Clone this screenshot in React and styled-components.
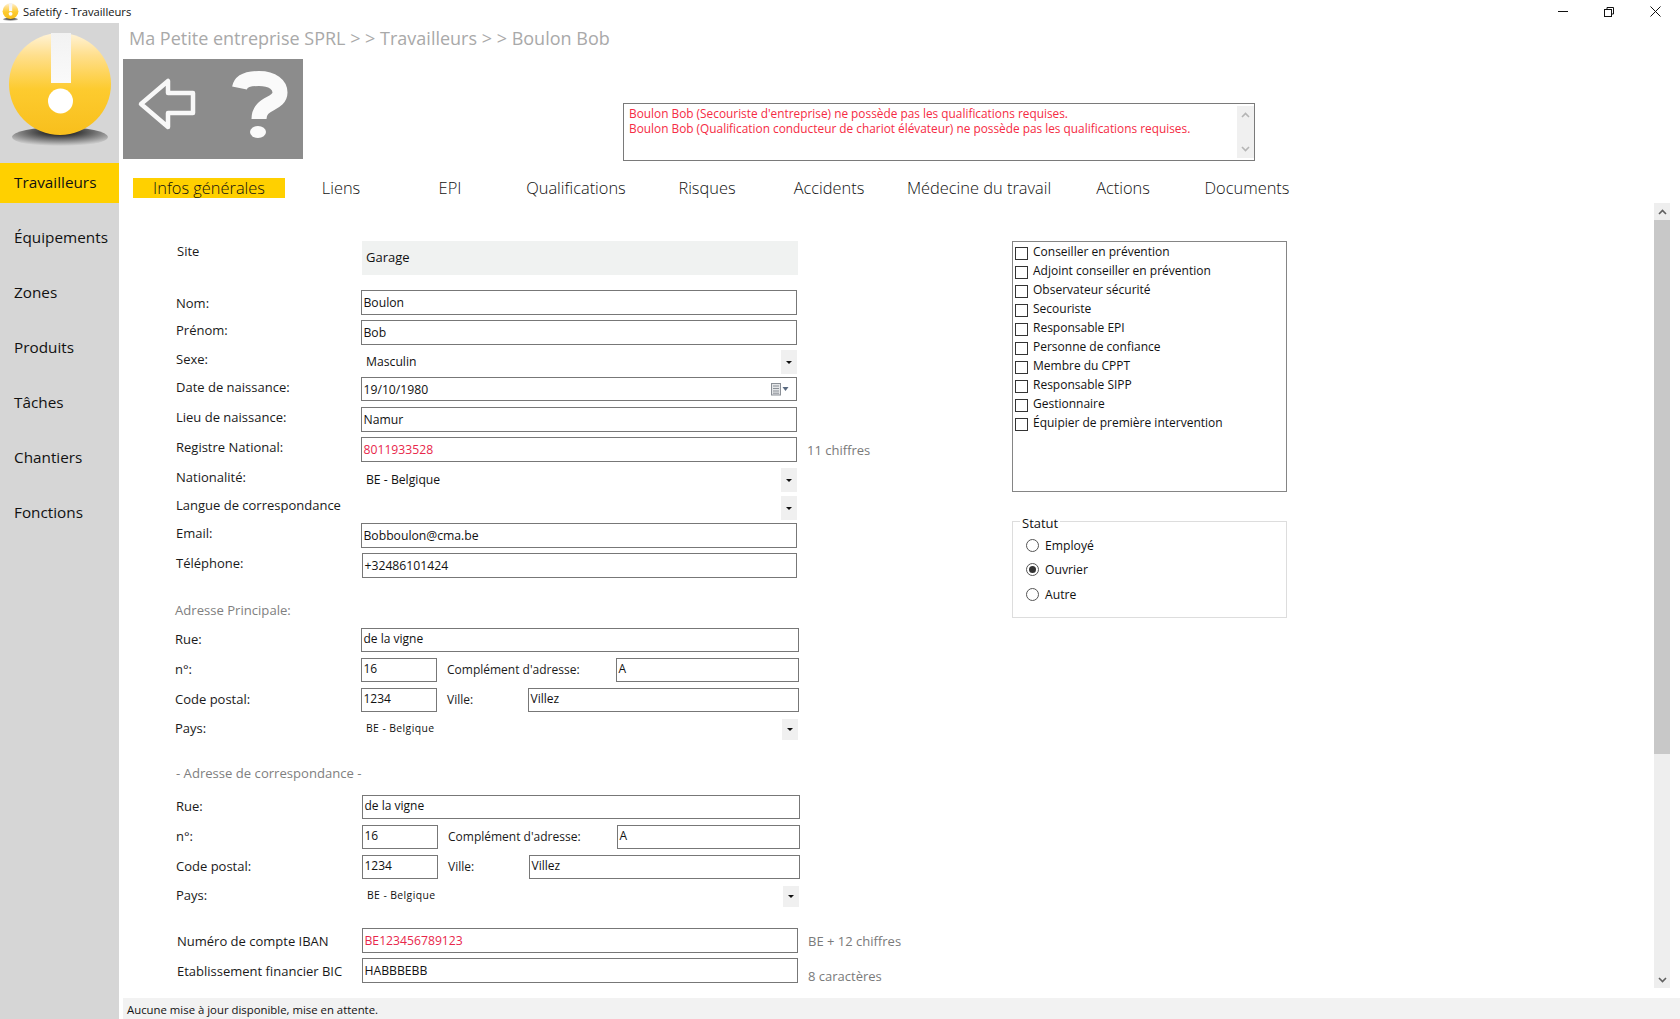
import React from 'react';
import styled, { createGlobalStyle } from 'styled-components';

const Global = createGlobalStyle`
  html, body { margin: 0; padding: 0; background: #fff; }
  body { font-family: "Open Sans", "Noto Sans", sans-serif; color: #111; }
  * { box-sizing: border-box; }
`;

const Window = styled.div`
  width: 1680px; height: 1019px; display: flex; flex-direction: column; overflow: hidden; background: #fff;
`;
const TitleBar = styled.div`
  height: 23px; display: flex; align-items: center; padding: 0 2px; font-size: 11.2px; color: #111;
`;
const TitleText = styled.span` margin-left: 4px; flex: 1; `;
const WinButton = styled.div`
  width: 46px; height: 23px; display: flex; align-items: center; justify-content: center;
`;
const Body = styled.div` display: flex; flex: 1; min-height: 0; `;
const Sidebar = styled.nav` width: 119px; background: #d6d6d6; display: flex; flex-direction: column; `;
const LogoWrap = styled.div` height: 140px; `;
const NavItem = styled.div`
  height: 40px; margin-bottom: 15px; padding: 0 0 2px 14px; display: flex; align-items: center;
  font-size: 15.3px; color: #111; background: ${p => (p.$active ? '#ffd000' : 'transparent')};
`;
const Main = styled.main` flex: 1; min-width: 0; display: flex; flex-direction: column; `;
const Breadcrumb = styled.div`
  height: 36px; padding: 2px 0 0 10px; font-size: 18px; line-height: 26px; color: #a9a9a9; white-space: pre;
`;
const Toolbar = styled.div` height: 100px; padding-left: 4px; display: flex; `;
const ActionButton = styled.div` width: 180px; height: 100px; background: #8c8c8c; `;
const ErrorBox = styled.div`
  width: 632px; height: 58px; margin: 44px 0 0 320px; border: 1px solid #7a7a7a; display: flex;
  padding: 2px 0 2px 5px; justify-content: space-between;
`;
const ErrorText = styled.div`
  color: #f52c44; font-size: 11.85px; line-height: 15px;
`;
const MiniBar = styled.div`
  width: 17px; background: #f0f0f0; display: flex; flex-direction: column; align-items: center; justify-content: space-between; padding: 6px 0;
`;
const Tabs = styled.div` margin-top: 19px; height: 20px; padding-left: 14px; display: flex; `;
const Tab = styled.div`
  width: ${p => p.$w}px; height: 20px; padding-bottom: 2px; display: flex; align-items: center; justify-content: center;
  font-size: 16.4px; font-weight: 300; color: #111; white-space: nowrap;
  background: ${p => (p.$active ? '#ffd000' : 'transparent')};
`;
const Content = styled.div` margin-top: 5px; flex: 1; min-height: 0; display: flex; `;
const FormArea = styled.div` flex: 1; min-width: 0; display: flex; padding: 38px 0 0 56px; `;
const LeftCol = styled.div` width: 760px; display: flex; flex-direction: column; `;
const RightCol = styled.div` margin-left: 77px; width: 275px; display: flex; flex-direction: column; `;
const Scrollbar = styled.div`
  width: 16px; margin-right: 10px; margin-bottom: 10px; background: #eee; display: flex; flex-direction: column;
`;
const ScrollEnd = styled.div` height: 17px; display: flex; align-items: center; justify-content: center; `;
const ScrollThumb = styled.div` height: 534px; background: #c8c8c8; `;
const ScrollRest = styled.div` flex: 1; `;
const StatusBar = styled.div`
  height: 21px; margin-left: 4px; padding: 2px 0 0 4px; background: #f2f2f2; display: flex; align-items: center; font-size: 11.36px; color: #111;
`;

const Row = styled.div`
  display: flex; flex: none; margin-top: ${p => p.$mt || 0}px; margin-left: ${p => p.$ml || 0}px; height: ${p => p.$h || 25}px;
`;
const Label = styled.div`
  width: 186px; flex: none; font-size: 13px; line-height: 14px; color: #1a1a1a; white-space: nowrap;
  padding-left: ${p => p.$pl ?? 1}px; padding-top: ${p => p.$pt ?? 2}px;
`;
const InlineLabel = styled.div`
  width: ${p => p.$w}px; flex: none; font-size: 12px; line-height: 16px; color: #1a1a1a; white-space: nowrap; padding: 4px 0 0 10px;
`;
const Heading = styled.div`
  margin-top: ${p => p.$mt}px; padding-left: ${p => p.$pl || 0}px; font-size: 13.1px; height: 16px; line-height: 14px; color: #808080; flex: none;
`;
const Field = styled.div`
  width: ${p => p.$w}px; height: 100%; flex: none; border: 1px solid #777; padding: ${p => (p.$small ? '0 0 3px 1.5px' : '0 0 0 1.5px')}; display: flex; align-items: center;
  justify-content: space-between; font-size: ${p => (p.$small ? '12px' : '12.2px')};
  color: ${p => (p.$error ? '#e8274b' : '#111')}; margin-left: ${p => p.$ml || 0}px;
`;
const ReadOnlyBox = styled.div`
  width: 436px; height: 100%; margin-left: 1px; background: #f0f2f1; display: flex; align-items: center; padding: 0 0 2px 4px; font-size: 13px;
`;
const Select = styled.div`
  width: ${p => p.$w || 436}px; height: 100%; display: flex; justify-content: space-between; align-items: ${p => (p.$compact ? 'flex-start' : 'center')};
  padding-left: 5px; font-size: ${p => (p.$compact ? '10.4px' : '12.2px')};
  letter-spacing: ${p => (p.$compact ? '0.4px' : '0')}; line-height: 18px;
`;
const SelectArrow = styled.div`
  width: 16px; height: 100%; background: #f0f0f0; display: flex; align-items: center; justify-content: center; flex: none;
  &::after { content: ''; border: 3px solid transparent; border-top: 3.5px solid #111; border-bottom: 0; }
`;
const Hint = styled.div`
  font-size: 13px; line-height: 18px; color: #7a7a7a; white-space: nowrap; margin-left: ${p => p.$ml || 10}px; padding-top: ${p => p.$pt || 4}px;
`;
const CalendarSlot = styled.span` margin-right: 6px; display: flex; `;
const CheckList = styled.div`
  width: 275px; height: 251px; border: 1px solid #858585; padding: 0 0 0 2px; flex: none;
`;
const CheckRow = styled.div`
  height: 19px; display: flex; align-items: center; font-size: 12px; color: #111;
`;
const CheckBox = styled.span`
  width: 13px; height: 13px; border: 1px solid #333; flex: none; margin: 3px 5px 0 0;
`;
const StatusGroup = styled.fieldset`
  width: 275px; height: 106px; margin: 20px 0 0; padding: 2px 0 0 13px; border: 1px solid #ddd; flex: none;
  display: block;
`;
const Legend = styled.legend`
  font-size: 13px; padding: 3px 2px 0; margin-left: -6px; line-height: 16px; color: #111;
`;
const RadioRow = styled.div`
  height: 24.6px; display: flex; align-items: center; font-size: 12.2px; color: #111;
`;
const RadioDot = styled.span`
  width: 13px; height: 13px; border-radius: 50%; border: 1px solid #555; margin-right: 6px; flex: none;
  display: flex; align-items: center; justify-content: center;
  &::after { content: ''; width: 7px; height: 7px; border-radius: 50%; background: ${p => (p.$on ? '#333' : 'transparent')}; }
`;

const Logo = ({ small }) => (
  <svg width={small ? 17 : 119} height={small ? 20 : 140} viewBox={small ? '5 4 110 124' : '0 0 119 140'} style={{ display: 'block' }}>
    <defs>
      <linearGradient id={small ? 'g1s' : 'g1'} x1="0" y1="0" x2="0" y2="1">
        <stop offset="0" stopColor="#fff3d8" />
        <stop offset="0.22" stopColor="#ffdf8c" />
        <stop offset="0.55" stopColor="#fdcb2f" />
        <stop offset="1" stopColor="#f8bf1c" />
      </linearGradient>
      <linearGradient id={small ? 'g2s' : 'g2'} x1="0" y1="0" x2="0" y2="1">
        <stop offset="0" stopColor="#f2f2f2" />
        <stop offset="1" stopColor="#fafafa" />
      </linearGradient>
      <radialGradient id={small ? 'g3s' : 'g3'} cx="0.5" cy="0.25" r="0.7">
        <stop offset="0.2" stopColor="#2c2c2c" />
        <stop offset="0.6" stopColor="#808080" />
        <stop offset="1" stopColor="#d6d6d6" />
      </radialGradient>
    </defs>
    <ellipse cx="60" cy="114" rx="48" ry="10" fill={`url(#${small ? 'g3s' : 'g3'})`} />
    <circle cx="60" cy="61" r="51" fill={`url(#${small ? 'g1s' : 'g1'})`} />
    <rect x="51" y="10" width="20" height="50" fill={`url(#${small ? 'g2s' : 'g2'})`} />
    <circle cx="60.5" cy="78" r="12.5" fill="#fff" />
  </svg>
);

const ChevronUp = ({ color = '#606060' }) => (
  <svg width="9" height="6" viewBox="0 0 9 6"><path d="M1 5 L4.5 1.5 L8 5" fill="none" stroke={color} strokeWidth="1.6" /></svg>
);
const ChevronDown = ({ color = '#606060' }) => (
  <svg width="9" height="6" viewBox="0 0 9 6"><path d="M1 1 L4.5 4.5 L8 1" fill="none" stroke={color} strokeWidth="1.6" /></svg>
);

const Calendar = () => (
  <svg width="20" height="14" viewBox="0 0 20 14">
    <rect x="1.5" y="1.5" width="9" height="11.5" fill="#e4e6e8" stroke="#8a8f96" />
    <path d="M3 4h6M3 6.5h6M3 9h6M3 11.2h6" stroke="#8a8f96" strokeWidth="1" />
    <path d="M12.5 5h6l-3 4z" fill="#5a6a80" />
  </svg>
);

const tabs = [
  ['Infos générales', 152], ['Liens', 112], ['EPI', 106], ['Qualifications', 146], ['Risques', 116],
  ['Accidents', 128], ['Médecine du travail', 172], ['Actions', 116], ['Documents', 132],
];
const nav = ['Travailleurs', 'Équipements', 'Zones', 'Produits', 'Tâches', 'Chantiers', 'Fonctions'];
const roles = [
  'Conseiller en prévention', 'Adjoint conseiller en prévention', 'Observateur sécurité', 'Secouriste',
  'Responsable EPI', 'Personne de confiance', 'Membre du CPPT', 'Responsable SIPP', 'Gestionnaire',
  'Équipier de première intervention',
];

const Address = ({ ml }) => (
  <>
    <Row $mt={ml ? 13 : 9} $h={24} $ml={ml}>
      <Label $pl={0} $pt={4}>Rue:</Label>
      <Field $w={438} $small>de la vigne</Field>
    </Row>
    <Row $mt={6} $h={24} $ml={ml}>
      <Label $pl={0} $pt={4}>n°:</Label>
      <Field $w={76} $small>16</Field>
      <InlineLabel $w={179}>Complément d'adresse:</InlineLabel>
      <Field $w={183} $small>A</Field>
    </Row>
    <Row $mt={6} $h={24} $ml={ml}>
      <Label $pl={0} $pt={4}>Code postal:</Label>
      <Field $w={76} $small>1234</Field>
      <InlineLabel $w={91}>Ville:</InlineLabel>
      <Field $w={271} $small>Villez</Field>
    </Row>
    <Row $mt={7} $h={21} $ml={ml}>
      <Label $pl={0} $pt={2}>Pays:</Label>
      <Select $w={437} $compact>BE - Belgique<SelectArrow /></Select>
    </Row>
  </>
);

export default function App() {
  return (
    <Window>
      <Global />
      <TitleBar>
        <Logo small />
        <TitleText>Safetify - Travailleurs</TitleText>
        <WinButton><svg width="10" height="2"><rect width="10" height="1" fill="#111" /></svg></WinButton>
        <WinButton>
          <svg width="10" height="10" viewBox="0 0 10 10" fill="#fff" stroke="#111">
            <path d="M3 2.5V0.5H9.5V7H7.5" fill="none" />
            <rect x="0.5" y="2.5" width="7" height="7" />
          </svg>
        </WinButton>
        <WinButton>
          <svg width="11" height="11" viewBox="0 0 11 11" stroke="#111"><path d="M0.5 0.5L10.5 10.5M10.5 0.5L0.5 10.5" /></svg>
        </WinButton>
      </TitleBar>
      <Body>
        <Sidebar>
          <LogoWrap><Logo /></LogoWrap>
          {nav.map((n, i) => <NavItem key={n} $active={i === 0}>{n}</NavItem>)}
        </Sidebar>
        <Main>
          <Breadcrumb>Ma Petite entreprise SPRL &gt; &gt; Travailleurs &gt; &gt; Boulon Bob</Breadcrumb>
          <Toolbar>
            <ActionButton>
              <svg width="180" height="100" viewBox="0 0 180 100" style={{ display: 'block' }}>
                <path d="M18 45 L45 22 L45 34 L70 34 L70 54 L45 54 L45 68 Z" fill="none" stroke="#f8f8f8" strokeWidth="4.5" strokeLinejoin="round" />
                <path d="M116.5 29 C118 21 127 19.5 136 19.5 C150 19.5 157 26 157 33.5 C157 46 136 43 136 60" fill="none" stroke="#fafafa" strokeWidth="15" />
                <ellipse cx="135" cy="73" rx="8" ry="6" fill="#fafafa" />
              </svg>
            </ActionButton>
            <ErrorBox>
              <ErrorText>
                Boulon Bob (Secouriste d'entreprise) ne possède pas les qualifications requises.<br />
                Boulon Bob (Qualification conducteur de chariot élévateur) ne possède pas les qualifications requises.
              </ErrorText>
              <MiniBar><ChevronUp color="#b5b5b5" /><ChevronDown color="#b5b5b5" /></MiniBar>
            </ErrorBox>
          </Toolbar>
          <Tabs>
            {tabs.map(([t, w], i) => <Tab key={t} $w={w} $active={i === 0}>{t}</Tab>)}
          </Tabs>
          <Content>
            <FormArea>
              <LeftCol>
                <Row $h={34}>
                  <Label $pl={2} $pt={3}>Site</Label>
                  <ReadOnlyBox>Garage</ReadOnlyBox>
                </Row>
                <Row $mt={15}><Label $pt={6}>Nom:</Label><Field $w={436}>Boulon</Field></Row>
                <Row $mt={5}><Label $pt={3}>Prénom:</Label><Field $w={436}>Bob</Field></Row>
                <Row $mt={5} $h={24}><Label $pt={2}>Sexe:</Label><Select>Masculin<SelectArrow /></Select></Row>
                <Row $mt={3} $h={24}><Label $pt={3}>Date de naissance:</Label><Field $w={436}>19/10/1980<CalendarSlot><Calendar /></CalendarSlot></Field></Row>
                <Row $mt={6}><Label $pt={3}>Lieu de naissance:</Label><Field $w={436}>Namur</Field></Row>
                <Row $mt={5}>
                  <Label $pt={3}>Registre National:</Label>
                  <Field $w={436} $error>8011933528</Field>
                  <Hint>11 chiffres</Hint>
                </Row>
                <Row $mt={6} $h={24}><Label $pt={2}>Nationalité:</Label><Select>BE - Belgique<SelectArrow /></Select></Row>
                <Row $mt={4} $h={24}><Label $pt={2}>Langue de correspondance</Label><Select><span /><SelectArrow /></Select></Row>
                <Row $mt={3}><Label $pt={3}>Email:</Label><Field $w={436}>Bobboulon@cma.be</Field></Row>
                <Row $mt={5}><Label $pt={3}>Téléphone:</Label><Field $w={435} $ml={1}>+32486101424</Field></Row>

                <Heading $mt={25}>Adresse Principale:</Heading>
                <Address />

                <Heading $mt={26} $pl={1}>- Adresse de correspondance -</Heading>
                <Address ml={1} />

                <Row $mt={21}>
                  <Label $pl={2} $pt={6}>Numéro de compte IBAN</Label>
                  <Field $w={436} $ml={1} $error>BE123456789123</Field>
                  <Hint>BE + 12 chiffres</Hint>
                </Row>
                <Row $mt={5}>
                  <Label $pl={2} $pt={6}>Etablissement financier BIC</Label>
                  <Field $w={436} $ml={1}>HABBBEBB</Field>
                  <Hint $pt={9}>8 caractères</Hint>
                </Row>
              </LeftCol>
              <RightCol>
                <CheckList>
                  {roles.map(r => <CheckRow key={r}><CheckBox />{r}</CheckRow>)}
                </CheckList>
                <StatusGroup>
                  <Legend>Statut</Legend>
                  <RadioRow><RadioDot />Employé</RadioRow>
                  <RadioRow><RadioDot $on />Ouvrier</RadioRow>
                  <RadioRow><RadioDot />Autre</RadioRow>
                </StatusGroup>
              </RightCol>
            </FormArea>
            <Scrollbar>
              <ScrollEnd><ChevronUp /></ScrollEnd>
              <ScrollThumb />
              <ScrollRest />
              <ScrollEnd><ChevronDown /></ScrollEnd>
            </Scrollbar>
          </Content>
          <StatusBar>Aucune mise à jour disponible, mise en attente.</StatusBar>
        </Main>
      </Body>
    </Window>
  );
}
